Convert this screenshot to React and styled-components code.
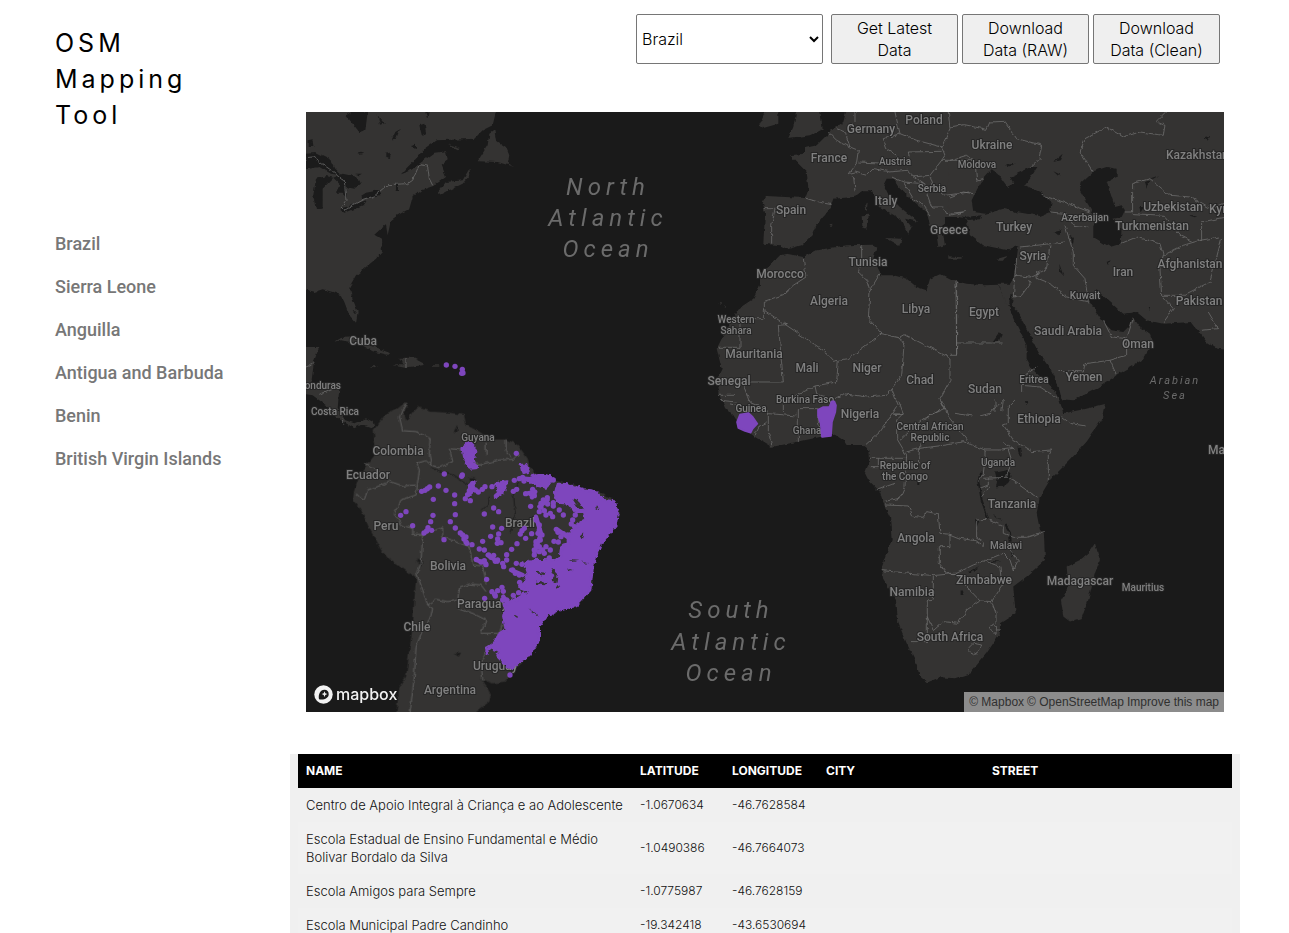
import React from 'react';
import styled, { createGlobalStyle } from 'styled-components';

const GlobalStyle = createGlobalStyle`
  *, *::before, *::after { box-sizing: border-box; }
  body {
    margin: 0;
    background: #fff;
    color: #000;
    font-family: Inter, 'Liberation Sans', sans-serif;
  }
`;

const Page = styled.div`
  display: flex;
  align-items: flex-start;
  min-height: 100vh;
`;

const Sidebar = styled.aside`
  flex: 0 0 290px;
  padding: 25px 56px 0 55px;
`;

const Title = styled.h1`
  margin: 0 0 94px;
  font-size: 25px;
  font-weight: 400;
  line-height: 36px;
  letter-spacing: 4px;
`;

const CountryList = styled.ul`
  display: flex;
  flex-direction: column;
  gap: 19px;
  margin: 0;
  padding: 5px 0 0;
  list-style: none;
`;

const CountryLink = styled.a`
  display: block;
  color: #777;
  font: 500 18px/24px Roboto, sans-serif;
  text-decoration: none;
  white-space: nowrap;
`;

const Main = styled.main`
  flex: 1;
  min-width: 0;
  margin-right: 49px;
`;

const Toolbar = styled.div`
  display: flex;
  justify-content: flex-end;
  gap: 4px;
  padding: 14px 20px 48px;
`;

const CountrySelect = styled.select`
  width: 187px;
  height: 50px;
  margin-right: 4px;
  padding: 0 0 0 1px;
  border: 1px solid #767676;
  border-radius: 2px;
  background: #fff;
  color: #000;
  font: 300 16px Inter, sans-serif;
`;

const ActionButton = styled.button`
  width: 127px;
  height: 50px;
  padding: 0 12px;
  border: 1px solid #767676;
  border-radius: 2px;
  background: #efefef;
  color: #000;
  font: 300 16px/22px Inter, sans-serif;
`;

const MapFrame = styled.section`
  position: relative;
  height: 600px;
  margin: 0 16px 42px;
  overflow: hidden;
  background: #1a1a1a;
`;

const MapDrawing = styled.svg`
  display: block;
  width: 100%;
  height: 100%;
`;

const Label = styled.text`
  fill: #808080;
  stroke: #252525;
  stroke-width: 2px;
  stroke-linejoin: round;
  paint-order: stroke;
  font-family: Roboto, sans-serif;
  font-weight: 500;
  font-size: ${(p) => (p.$small ? 10 : 12)}px;
  text-anchor: ${(p) => p.$anchor || 'middle'};
  dominant-baseline: central;
`;

const OceanLabel = styled.text`
  fill: #6b6b6b;
  font-family: Roboto, sans-serif;
  font-style: italic;
  font-size: ${(p) => (p.$small ? 11 : 24)}px;
  letter-spacing: ${(p) => (p.$small ? 2 : 5)}px;
  text-anchor: middle;
  dominant-baseline: central;
`;

const MapLogo = styled.a`
  position: absolute;
  left: 8px;
  bottom: 8px;
  display: flex;
  align-items: center;
  gap: 3px;
  color: #f2f2f2;
  font: 500 16px/20px Inter, sans-serif;
  text-decoration: none;
`;

const Attribution = styled.div`
  position: absolute;
  right: 0;
  bottom: 0;
  display: flex;
  gap: 3px;
  padding: 0 5px;
  background: #8c8c8c;
  font: 12px/20px 'Liberation Sans', Arial, sans-serif;
  white-space: nowrap;
`;

const AttributionLink = styled.a`
  color: #303030;
  text-decoration: none;
`;

const TablePanel = styled.section`
  padding: 0 8px;
  background: #f0f0f0;
`;

const SchoolTable = styled.table`
  width: 100%;
  border-collapse: collapse;
  table-layout: fixed;
  line-height: 18px;
`;

const Column = styled.col`
  width: ${(p) => p.$width || 'auto'};
`;

const HeadCell = styled.th`
  padding: 8px;
  background: #000;
  color: #fff;
  font-size: 12px;
  font-weight: 700;
  text-align: left;
`;

const Row = styled.tr`
  background: #f0f0f0;
  &:nth-child(even) { background: #f1f1f1; }
`;

const Cell = styled.td`
  padding: 8px;
  color: #111;
  font-size: ${(p) => (p.$name ? 13 : 12)}px;
  font-weight: 300;
`;

const countries = ['Brazil', 'Sierra Leone', 'Anguilla', 'Antigua and Barbuda', 'Benin', 'British Virgin Islands'];

const schools = [
  ['Centro de Apoio Integral à Criança e ao Adolescente', '-1.0670634', '-46.7628584'],
  ['Escola Estadual de Ensino Fundamental e Médio Bolivar Bordalo da Silva', '-1.0490386', '-46.7664073'],
  ['Escola Amigos para Sempre', '-1.0775987', '-46.7628159'],
  ['Escola Municipal Padre Candinho', '-19.342418', '-43.6530694'],
];

// [text, x, y, small, anchor]
const labels = [
  ['Germany', 565, 17], ['Poland', 618, 8], ['France', 523, 46], ['Austria', 589, 49, 1], ['Ukraine', 686, 33],
  ['Moldova', 671, 52, 1], ['Kazakhstan', 860, 43, 0, 'start'], ['Serbia', 626, 76, 1], ['Spain', 485, 98],
  ['Italy', 580, 89], ['Greece', 643, 118], ['Turkey', 708, 115], ['Azerbaijan', 779, 105, 1],
  ['Uzbekistan', 867, 95], ['Kyrgyzstan', 903, 97, 0, 'start'], ['Turkmenistan', 846, 114], ['Tunisia', 562, 150],
  ['Morocco', 474, 162], ['Syria', 727, 144], ['Iran', 817, 160], ['Afghanistan', 884, 152], ['Pakistan', 893, 189],
  ['Algeria', 523, 189], ['Libya', 610, 197], ['Egypt', 678, 200], ['Kuwait', 779, 183, 1],
  ['Saudi Arabia', 762, 219], ['Oman', 832, 232], ['Western', 430, 207, 1], ['Sahara', 430, 218, 1],
  ['Mauritania', 448, 242], ['Mali', 501, 256], ['Niger', 561, 256], ['Chad', 614, 268], ['Sudan', 679, 277],
  ['Eritrea', 728, 267, 1], ['Yemen', 778, 265], ['Senegal', 423, 269], ['Burkina Faso', 499, 287, 1],
  ['Guinea', 445, 296, 1], ['Nigeria', 554, 302], ['Ghana', 501, 318, 1], ['Central African', 624, 314, 1],
  ['Republic', 624, 325, 1], ['Ethiopia', 733, 307], ['Uganda', 692, 350, 1], ['Republic of', 599, 353, 1],
  ['the Congo', 599, 364, 1], ['Tanzania', 706, 392], ['Malawi', 700, 433, 1], ['Angola', 610, 426],
  ['Zimbabwe', 678, 468], ['Namibia', 606, 480], ['South Africa', 644, 525], ['Madagascar', 774, 469],
  ['Mauritius', 837, 475, 1], ['Maldives', 902, 338, 0, 'start'], ['Cuba', 57, 229], ['Honduras', 35, 273, 1, 'end'],
  ['Costa Rica', 29, 299, 1], ['Guyana', 172, 325, 1], ['Colombia', 92, 339], ['Ecuador', 62, 363], ['Peru', 80, 414],
  ['Brazil', 214, 411], ['Bolivia', 142, 454], ['Paraguay', 151, 492, 0, 'start'], ['Chile', 111, 515],
  ['Uruguay', 167, 554, 0, 'start'], ['Argentina', 144, 578],
];

const oceans = [
  ['North', 302, 75], ['Atlantic', 302, 106], ['Ocean', 302, 137],
  ['South', 425, 498], ['Atlantic', 425, 530], ['Ocean', 425, 561],
  ['Arabian', 869, 268, 1], ['Sea', 869, 283, 1],
];

// Scattered school locations in South America
const brazilPoints = [
  [631, 160], [415, 222], [469, 225], [467, 229], [397, 258], [420, 271], [371, 261], [364, 266], [357, 271], [347, 274],
  [382, 298], [446, 285], [446, 311], [448, 344], [300, 335], [284, 346], [320, 377], [354, 399], [362, 393],
  [366, 383], [377, 391], [374, 365], [381, 346], [414, 419], [433, 365], [448, 384], [463, 399], [470, 405],
  [480, 411], [480, 426], [474, 417], [483, 430], [498, 434], [493, 302], [478, 296], [485, 284], [490, 272],
  [500, 250], [500, 264], [508, 270], [517, 276], [529, 268], [537, 260], [558, 260], [535, 342], [563, 324],
  [578, 335], [560, 381], [587, 385], [578, 402], [554, 409], [530, 424], [520, 447], [535, 450], [575, 417],
  [574, 430], [585, 428], [511, 478], [525, 486], [535, 482], [540, 494], [548, 465], [555, 472], [568, 484],
  [563, 466], [575, 480], [590, 490], [593, 500], [602, 480], [602, 464], [617, 448], [633, 431], [659, 415],
  [677, 401], [655, 385], [643, 402], [648, 392], [631, 490], [648, 493], [620, 510], [628, 520], [640, 525],
  [641, 547], [622, 586], [638, 578], [542, 538], [536, 595], [558, 575], [566, 583], [575, 572], [568, 588],
  [588, 562], [592, 574], [590, 600], [602, 600], [598, 615], [610, 640], [612, 825], [625, 241], [640, 236],
  [650, 232], [654, 243], [622, 274], [632, 268], [659, 281], [674, 319], [724, 293], [733, 340], [720, 345],
  [730, 474], [733, 450], [751, 388], [756, 397], [772, 401], [772, 345], [740, 350], [744, 424], [757, 426],
  [765, 410], [785, 405], [799, 407], [790, 420], [775, 438], [690, 360], [700, 375], [700, 390], [696, 400],
  [680, 268], [685, 287], [676, 283], [742, 240], [808, 345], [800, 360], [796, 372], [806, 380], [825, 378],
  [835, 365], [742, 308], [742, 318], [760, 330], [712, 300], [705, 310], [705, 322], [700, 335], [715, 332],
  [725, 312], [708, 405], [690, 435], [685, 450], [700, 440], [710, 450], [720, 440], [715, 460], [700, 455],
  [685, 465], [690, 425], [703, 420],
];

const points = (list, r) => list.map(([x, y]) => <circle key={`${x}-${y}`} cx={x} cy={y} r={r} />);

function NorthAmerica() {
  return (
    <g transform="scale(.3333)">
      <g fill="#343332">
        <path d="M-9 -9H572L560 40 530 55 505 80 440 83 390 85 355 110 330 140 305 165 285 187 310 178 350 148 385 122 420 118 425 145 405 160 420 195 382 222 345 235 320 255 310 290 275 310 255 325 245 370 240 340 225 350 205 368 225 380 228 420 210 440 180 465 150 490 130 525 140 560 155 600 150 632 130 610 115 570 105 550 80 540 50 532 25 540 -9 530Z" />
        <path d="M395 240 420 210 470 205 490 170 493 188 470 215 430 235 405 248ZM515 148 545 100 550 65 565 55 570 85 600 105 610 130 605 155 625 165 575 150ZM425 95 465 108 455 112Z" />
        <path d="M85 690 105 678 150 675 190 700 250 722 245 728 200 718 160 695 105 685ZM190 762 215 763 210 769ZM258 760 290 760 280 737 320 737 355 755 350 760 310 765 300 768ZM378 760H400V764H378Z" />
        <path d="M-9 705 40 705 25 745 22 765 15 820 100 828 95 890 118 925 145 934 180 919 200 929 205 944 195 949 165 939 145 949 105 925 80 904 60 880 20 850-9 845Z" />
      </g>
      <g fill="#1b1b1b">
        <path d="M0 122 30 120 70 140 85 170 105 190 75 185 40 165 0 172ZM30 200 60 192 82 197 50 230 50 290 30 292 22 250ZM82 197 110 185 155 195 165 215 145 230 120 225 122 258 110 245 90 245 100 215ZM98 290 120 285 180 265 170 280 115 302ZM165 252 180 242 220 235 225 248 170 262Z" />
        <path d="M120 10 145 -5 185 0 178 55 160 60 140 35ZM340 40 355 35 360 60 348 72ZM258 82 268 60 282 52 270 80ZM5 85 20 82 22 105 5 105ZM238 125 255 122 252 138 238 135ZM315 103 330 93 330 108ZM155 120 172 125 160 128ZM215 10 228 28 240 32 222 38ZM358 0H368L364 22ZM148 185H168L160 190ZM270 215H276V235H270ZM140 598 150 598 146 606Z" />
      </g>
      <path fill="none" stroke="#777" strokeWidth="2" d="M0 137 20 135 80 178 115 205 120 265 105 285 115 295 175 262 205 252 245 218 305 215 320 205 340 158 365 162 370 200 380 220M0 765 25 755M40 850 95 825M300 738V768M110 920V935" />
    </g>
  );
}

function SouthAmerica() {
  return (
    <g transform="translate(0 288) scale(.3333)">
      <path fill="#343332" d="M203 90 240 40 275 25 300 5 305 15 292 40 305 58 320 35 335 20 375 35 430 38 475 45 480 75 520 95 555 118 600 118 635 135 665 175 672 200 690 225 740 240 780 250 830 265 880 275 925 300 938 340 930 375 885 430 870 470 862 500 855 570 810 620 760 630 720 650 700 680 700 720 670 770 640 790 600 845 560 850 525 838 545 865 555 885 550 905 500 945H270L280 860 300 830 310 750 320 680 325 600 330 535 290 505 250 480 225 450 190 385 165 330 140 300 145 270 160 225 190 185 210 160 205 120Z" />
      <path fill="#1b1b1b" d="M294 38 306 32 312 50 300 62ZM443 95 453 78 455 98ZM330 478 350 485 345 500ZM443 760 465 758 458 770ZM487 235 510 235 505 245 490 243Z" />
      <path fill="none" stroke="#1b1b1b" strokeWidth="3" d="M375 203 400 215 440 225 480 250 510 262M528 330 545 315 550 290M612 400 628 345 622 280 640 245" />
      <path fill="none" stroke="#777" strokeWidth="2" d="M303 10 280 50 290 92 330 95 372 115 370 165 375 195 400 203 440 185 430 145 470 150 500 185 520 195 580 180 620 178 640 160M540 125V162M600 118V150L615 172M375 195 360 182 332 190 340 210 330 285 285 300 265 340 285 375 320 385V403H350L410 383V410L490 440 500 495 530 498 540 550M175 190 215 215 255 245 290 258 330 255M150 285 175 298 185 270 250 245M350 403 345 490 332 520 350 570 365 615 380 625 375 650 350 690 330 740 325 830 312 940M365 615 390 598 425 605 455 600 460 565 490 552 525 555 540 575M455 625 500 640 540 660 525 700 580 700 590 670M530 838 525 790 540 755" />
    </g>
  );
}

function AfricaAndEurasia() {
  return (
    <g transform="translate(394 0) scale(.3333)">
      <g fill="#343332">
        <path d="M240 430 260 425 310 435 350 415 440 400 520 398 530 405 520 440 535 470 545 490 580 490 620 500 650 525 680 535 690 500 720 487 755 505 800 515 850 520 895 518 925 580 950 640 980 700 980 740 1000 775 1050 820 1075 855 1085 885 1090 904 1140 894 1215 876 1205 924 1160 989 1110 1044 1050 1104 1020 1154 1010 1204 1020 1254 1032 1264 1035 1344 980 1394 940 1424 947 1504 900 1534 900 1564 860 1624 810 1684 765 1699 720 1696 682 1712 660 1694 645 1644 620 1594 595 1534 588 1464 550 1404 545 1364 575 1284 570 1214 550 1174 540 1139 505 1104 495 1084 510 1044 508 1014 490 999 440 999 430 985 405 968 360 975 290 990 215 1005 165 975 120 940 100 910 75 885 60 850 50 800 65 770 50 710 80 650 115 590 160 560 180 520 180 490 220 450Z" />
        <path d="M440 -9 430 30 395 55 380 70 350 100 315 108 315 125 270 130 290 150 320 180 325 230 315 258 200 252 188 270 195 300 190 395 240 400 262 412 305 400 335 370 345 345 390 290 400 260 460 255 490 235 515 235 540 285 600 320 625 365 635 345 615 320 655 330 600 285 565 250 550 220 560 200 580 200 600 230 650 275 680 300 690 340 710 370 715 405 735 400 730 370 715 350 735 335 735 315 770 315V-9Z" />
        <path d="M265 78 280 45 290 -9H360L368 50 330 70ZM178 40 200 -9H235V35L190 48ZM485 310 507 308 500 350 487 345ZM495 275 503 272 500 298ZM555 378 605 380 598 402ZM745 433 785 436V440H745ZM893 440 922 432 912 446 898 446ZM388 340 398 338 394 346ZM55 575 62 572 62 580ZM72 582H80V588ZM1185 1294 1200 1344 1185 1384 1165 1464 1145 1519 1110 1529 1090 1514 1083 1464 1105 1424 1100 1364 1140 1344 1165 1324Z" />
      </g>
      <g transform="translate(750 0)">
        <path fill="#343332" d="M-5 -9H839V715L800 710 770 690 725 630 640 635 590 625 560 600 520 605 480 570 440 535 415 560 440 600 460 630 485 655 520 660 540 640 548 615 565 640 600 665 610 690 575 745 500 790 440 830 370 865 335 862 325 820 300 770 265 720 230 650 200 595 185 580 172 580 145 515 180 515 190 500 200 440 205 402 175 415 125 405 100 400 60 370 55 340 45 318 0 312H-5Z" />
        <g fill="#1b1b1b">
          <path d="M125 172 145 185 158 205 175 228 190 212 180 195 245 165 262 165 240 200 225 220 270 240 305 270 300 300 270 312 200 300 160 290 110 305 70 300 65 265 85 225 100 200ZM45 315 95 310 90 322 50 324Z" />
          <path d="M395 210 430 178 470 165 500 170 500 195 470 210 480 240 490 270 495 285 515 280 525 295 515 315 490 320 515 350 512 395 480 405 430 375 430 340 440 320 410 270 390 235Z" />
          <path d="M310 150 338 125 330 145ZM310 178 335 190 325 192ZM765 75 778 72 770 86ZM585 210 598 205 592 230ZM598 200 628 190 610 200ZM313 360 335 355 325 370ZM360 368 372 378 368 398ZM328 455 340 490 330 480ZM470 450 482 445 475 458ZM125 695 150 660 155 668 145 690ZM568 285 580 285 572 298ZM715 310 745 310 735 316ZM165 155 195 152 175 165ZM593 585H600V597ZM222 868 234 868 228 880ZM182 545 188 550 186 585 178 575Z" />
        </g>
        <path fill="none" stroke="#777" strokeWidth="2" d="M0 45 40 38 110 52 120 30 165 28 200 80 278 100 270 140 245 165M0 145 50 130 75 150 80 205 100 200M0 255 40 240 70 245M0 310 40 300 50 290M275 250 340 270 420 300M300 300 350 305 370 340 415 345M345 340 370 420 370 460 405 500 415 570M210 405 260 400 345 390M195 490 240 495 290 470 300 400M200 440 195 490 190 555 215 550 240 515 235 505M260 480 262 500 300 515 350 555 415 570M512 395 560 375 630 395 640 430 630 470 635 550 670 590 640 632M430 180 390 120 405 80 470 45 520 75 570 60 640 70 645 40 620 30 650 0M525 300H548V215L600 200 660 250 720 255 780 290 830 270M548 305 640 310 690 370 730 390M640 430 700 400 750 385 810 375M635 550 700 550 780 510 815 380M460 625 485 675 530 680 550 620M530 680V730L480 745 405 755 400 780 325 775M480 745 500 790M215 840V820L270 825 325 860M260 765 210 800M775 600 805 650 755 655M755 330 830 315M755 330V385M20 510V730M135 865V900M160 865 155 900" />
      </g>
      <path fill="none" stroke="#777" strokeWidth="2" d="M310 440 318 495 280 520 250 548 193 568V620H120V706H52M193 595 370 715 400 748 415 745 445 740 545 665 598 678 615 668 750 738V805L720 860 735 890 670 920 600 985M260 638 235 640 250 810H155L130 820 150 870 200 890 205 905 290 912M415 745 410 810 345 822 300 845 250 870V900M345 822 350 845 390 860M485 400V450L475 480 500 505 510 540 505 620 545 665M540 485 510 535M768 508 770 730H750M770 693H908M598 678 612 700 605 790 575 830 560 850 500 855 430 845 405 860M295 890H355V930L365 975M295 890V990M205 905V960L215 1000M55 850H105M60 865 110 870M90 875 110 880M165 970 180 940 200 930M575 830 595 880 540 960 495 1000M580 907H610" />
      <path fill="none" stroke="#777" strokeWidth="2" d="M315 258 355 270 395 278M190 290H225L215 340V395M385 60 410 85 450 105 475 115 470 150 445 185 465 180 500 190 520 170 570 180 620 175 640 195 690 190 725 145H820M410 50 435 60 450 105M460 190 465 235M585 0 600 65 550 80 560 110 590 130M465 0V30L445 50M600 65 650 85 725 105M745 0 750 50 725 105 735 130 725 145M475 150 580 155 630 145 625 120 725 118M575 195 610 210 640 260 670 280 690 310M610 210 670 215 695 285 730 285 740 305 790 300M690 190 700 220 735 250 810 240M640 195 670 215" />
      <g transform="translate(420 864)">
        <path fill="#1b1b1b" d="M465 215 500 208 515 225 495 260 465 262 470 235ZM533 138 545 150 545 170 535 160ZM405 360 418 362 410 382ZM440 483 485 485 460 488ZM385 515 418 498 390 520ZM460 342 485 360 465 352ZM362 572H370V585H362ZM552 3 564 5 558 14ZM232 245H238V258H232ZM510 450 525 462 518 472Z" />
        <path fill="none" stroke="#1b1b1b" strokeWidth="6" d="M425 215 415 245 420 270 425 300 445 358M497 375 510 395 512 425" />
        <path fill="none" stroke="#777" strokeWidth="2" d="M175 0 190 40 170 60V115L200 165 195 260 180 295 130 305M160 42H190M200 155 240 145 320 135 370 125 435 150H485L520 145 490 130M240 130 235 190M305 0 325 50 390 130M250 60 300 30M345 40 395 48M420 48 450 40 490 0M525 0 505 20V70L490 75 520 120 575 155 635 150 625 165V240M665 50 690 70 740 78M90 175H200M115 175V200H90M110 270 165 250M435 150V180L430 220 415 245M430 235 505 232 590 292M505 150 515 180 500 230M420 265 445 255 445 235M450 260 425 290M135 315 205 318 220 350 250 352 260 335 295 342 300 400 330 403V440H298V490L320 520 350 520M330 403 360 415 405 422 430 440V425L410 415V360L445 358 490 380V400L520 412 560 412 612 395M125 512 280 527 350 520 400 495 440 480 490 460 510 480 520 510 535 480 510 450M280 530V598L262 600V725H215M440 485 480 500 485 560 455 605 420 603 380 560 350 525M455 605 468 640V670M420 603 380 630 355 670 310 665 280 692 262 650M385 745 400 730 425 735 415 755 400 765ZM450 685 460 672 470 680 468 700 455 698ZM470 690H485" />
      </g>
    </g>
  );
}

function SchoolPoints() {
  return (
    <g fill="#7e46bd" stroke="#7e46bd" strokeLinejoin="round" strokeLinecap="round">
      <g transform="scale(.3333)" stroke="none">
        {points([[421, 759], [447, 763], [469, 772], [467, 784], [471, 783]], 8)}
      </g>
      <g transform="translate(0 288) scale(.3333)">
        <g stroke="none">{points(brazilPoints, 8)}</g>
        <g strokeWidth="8" filter="url(#edge)">
          <path d="M755 252 780 253 830 268 870 275 890 300 925 305 935 340 928 375 885 430 870 470 860 500 852 570 808 618 760 628 720 648 698 680 698 720 668 770 640 785 618 805 600 795 575 770 580 750 550 745 542 758 542 745 565 730 572 710 600 690 592 650 600 610 640 595 665 570 640 560 655 550 665 525 655 490 680 480 740 482 762 475 765 450 785 430 790 400 815 375 840 360 835 335 810 335 790 310 765 308 745 290Z" />
          <path d="M470 145 490 127 508 145 505 170 498 190 515 203 490 205 475 170ZM645 195 660 195 668 215 650 218ZM675 230 700 223 735 230 738 240 720 262 700 258 670 245ZM570 250 600 245 600 260 590 280 570 290 580 270ZM490 255 505 245 505 270 485 290Z" />
        </g>
        <g fill="none" strokeWidth="13">
          <path d="M570 288 585 275M645 235 700 240M665 280 688 275 678 292M690 350 705 400 685 460M700 320 725 300M756 390 790 415M545 465 575 485M510 480 540 490M615 510 650 525M592 590 605 610" />
        </g>
        <g fill="#343332" stroke="none" filter="url(#edge)">
          <path d="M798 295 815 300 832 325 820 328ZM735 505 755 520 752 548 735 545 745 530ZM690 515 720 518 715 525 690 520ZM690 545 725 548 715 556 690 552ZM788 480 820 482 800 486ZM825 485 850 490 830 491ZM625 645 640 655 632 656ZM670 628 690 640 700 655ZM785 505 800 510 785 514ZM868 320 878 322 870 328ZM750 560 765 556 755 566ZM655 575 665 570 660 584ZM820 410 832 400 828 414Z" />
        </g>
      </g>
      <g transform="translate(394 0) scale(.3333)" strokeWidth="5">
        <path d="M354 893 370 885 388 885 395 868 403 868 408 880 406 900 396 930 393 972 366 975 362 935 354 912Z" />
        <path d="M111 930 120 908 145 903 158 915 172 935 158 950 152 962 135 957 115 948Z" />
      </g>
    </g>
  );
}

function WorldMap() {
  return (
    <MapDrawing viewBox="0 0 918 600" preserveAspectRatio="xMidYMid slice" role="img" aria-label="Map of school locations">
      <defs>
        <filter id="coast" x="0" y="0" width="100%" height="100%" colorInterpolationFilters="sRGB">
          <feTurbulence type="fractalNoise" baseFrequency="0.18" numOctaves="2" seed="4" />
          <feDisplacementMap in="SourceGraphic" scale="4" xChannelSelector="R" yChannelSelector="G" />
        </filter>
        <filter id="edge" colorInterpolationFilters="sRGB">
          <feTurbulence type="fractalNoise" baseFrequency="0.08" numOctaves="2" seed="9" />
          <feDisplacementMap in="SourceGraphic" scale="16" xChannelSelector="R" yChannelSelector="G" />
        </filter>
      </defs>
      <g filter="url(#coast)">
        <NorthAmerica />
        <SouthAmerica />
        <AfricaAndEurasia />
      </g>
      {oceans.map(([text, x, y, small]) => (
        <OceanLabel key={`${text}-${y}`} x={x} y={y} $small={small}>{text}</OceanLabel>
      ))}
      {labels.map(([text, x, y, small, anchor]) => (
        <Label key={`${text}-${y}`} x={x} y={y} $small={small} $anchor={anchor}>{text}</Label>
      ))}
      <SchoolPoints />
    </MapDrawing>
  );
}

function LogoMark() {
  return (
    <svg width="19" height="19" viewBox="0 0 19 19" aria-hidden="true">
      <circle cx="9.5" cy="9.5" r="9.2" fill="#f2f2f2" />
      <path d="M5 14.2C4 9.6 6.2 4.8 10.4 4.8a4.4 4.4 0 0 1 4.3 4.4c0 4-4.700 6-9.700 5Z" fill="#1b1b1b" />
      <path d="M10.500 6.300 11.300 8.300 13.300 9.100 11.300 9.900 10.500 11.900 9.700 9.900 7.700 9.100 9.700 8.300Z" fill="#f2f2f2" />
    </svg>
  );
}

export default function App() {
  return (
    <>
      <GlobalStyle />
      <Page>
        <Sidebar>
          <Title>OSM Mapping Tool</Title>
          <nav aria-label="Countries">
            <CountryList>
              {countries.map((name) => (
                <li key={name}><CountryLink href="#map">{name}</CountryLink></li>
              ))}
            </CountryList>
          </nav>
        </Sidebar>
        <Main>
          <Toolbar>
            <CountrySelect aria-label="Country" defaultValue="Brazil">
              {countries.map((name) => <option key={name}>{name}</option>)}
            </CountrySelect>
            <ActionButton type="button">Get Latest Data</ActionButton>
            <ActionButton type="button">Download Data (RAW)</ActionButton>
            <ActionButton type="button">Download Data (Clean)</ActionButton>
          </Toolbar>
          <MapFrame id="map">
            <WorldMap />
            <MapLogo href="#mapbox"><LogoMark />mapbox</MapLogo>
            <Attribution>
              <AttributionLink href="#mapbox">© Mapbox</AttributionLink>
              <AttributionLink href="#osm">© OpenStreetMap</AttributionLink>
              <AttributionLink href="#improve">Improve this map</AttributionLink>
            </Attribution>
          </MapFrame>
          <TablePanel>
            <SchoolTable>
              <colgroup>
                <Column />
                <Column $width="92px" />
                <Column $width="94px" />
                <Column $width="166px" />
                <Column $width="248px" />
              </colgroup>
              <thead>
                <tr>
                  {['NAME', 'LATITUDE', 'LONGITUDE', 'CITY', 'STREET'].map((h) => (
                    <HeadCell key={h} scope="col">{h}</HeadCell>
                  ))}
                </tr>
              </thead>
              <tbody>
                {schools.map(([name, lat, lon]) => (
                  <Row key={name}>
                    <Cell $name>{name}</Cell>
                    <Cell>{lat}</Cell>
                    <Cell>{lon}</Cell>
                    <Cell />
                    <Cell />
                  </Row>
                ))}
              </tbody>
            </SchoolTable>
          </TablePanel>
        </Main>
      </Page>
    </>
  );
}
